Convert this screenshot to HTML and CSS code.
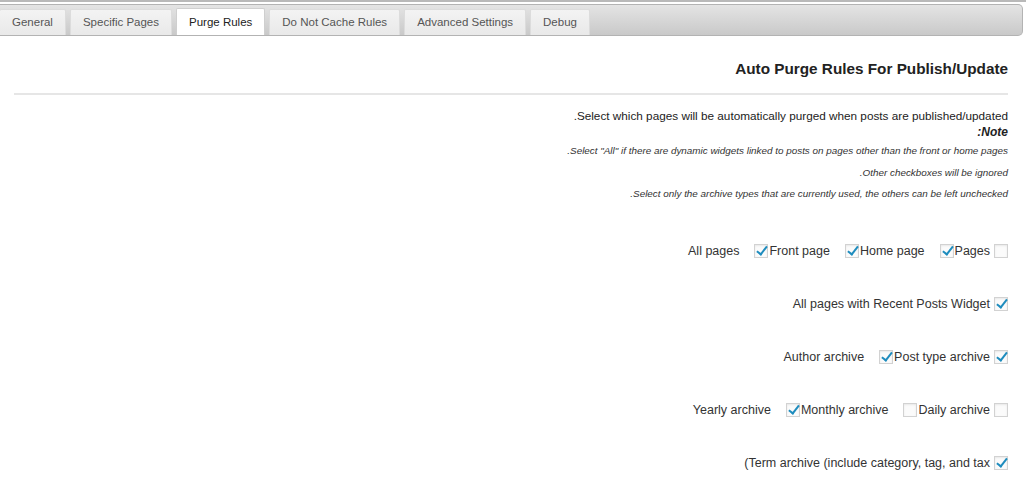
FILE: index.html
```html
<!DOCTYPE html>
<html>
<head>
<meta charset="utf-8">
<link rel="stylesheet" href="styles.css">
</head>
<body>
<div class="page">
  <div class="tabbar">
    <div class="tab">General</div>
    <div class="tab">Specific Pages</div>
    <div class="tab active">Purge Rules</div>
    <div class="tab">Do Not Cache Rules</div>
    <div class="tab">Advanced Settings</div>
    <div class="tab">Debug</div>
  </div>
  <div class="content" dir="rtl">
    <h3 class="title">Auto Purge Rules For Publish/Update</h3>
    <hr class="rule">
    <p class="lead">Select which pages will be automatically purged when posts are published/updated.</p>
    <p class="note">Note:</p>
    <p class="small s1">Select "All" if there are dynamic widgets linked to posts on pages other than the front or home pages.</p>
    <p class="small s2">Other checkboxes will be ignored.</p>
    <p class="small s3">Select only the archive types that are currently used, the others can be left unchecked.</p>

    <div class="rows" dir="ltr">
      <div class="row">
        <span class="lbl">All pages</span>
        <span class="opt"><span class="cb on"></span>Front page</span>
        <span class="opt"><span class="cb on"></span>Home page</span>
        <span class="opt last"><span class="cb on"></span>Pages</span>
        <span class="cb"></span>
      </div>
      <div class="row">
        <span class="lbl last">All pages with Recent Posts Widget</span>
        <span class="cb on"></span>
      </div>
      <div class="row">
        <span class="lbl">Author archive</span>
        <span class="opt last"><span class="cb on"></span>Post type archive</span>
        <span class="cb on"></span>
      </div>
      <div class="row">
        <span class="lbl">Yearly archive</span>
        <span class="opt"><span class="cb on"></span>Monthly archive</span>
        <span class="opt last"><span class="cb"></span>Daily archive</span>
        <span class="cb"></span>
      </div>
      <div class="row">
        <span class="lbl last">(Term archive (include category, tag, and tax</span>
        <span class="cb on"></span>
      </div>
    </div>
  </div>
</div>
</body>
</html>
```
FILE: styles.css
```css
html, body {
  margin: 0;
  padding: 0;
  background: #fff;
}
body {
  font-family: "Liberation Sans", Arial, sans-serif;
  color: #333;
  font-size: 12px;
}
.page {
  width: 1026px;
  height: 483px;
  overflow: hidden;
  border-top: 2px solid #b9b9b9;
  box-sizing: border-box;
  padding-top: 2px;
}
.tabbar {
  display: flex;
  align-items: flex-end;
  gap: 4px;
  height: 30px;
  margin-right: 3px;
  background: linear-gradient(#e4e4e4, #c9c9c9);
  border: 1px solid #b3b3b3;
  border-left: none;
  border-radius: 0 5px 5px 0;
}
.tab {
  height: 26px;
  line-height: 25px;
  padding: 0 12px;
  background: linear-gradient(#f3f3f3, #e9e9e9);
  color: #555;
  font-size: 11.5px;
  border: 1px solid #dcdcdc;
  border-bottom: none;
  box-sizing: border-box;
  border-radius: 2px 2px 0 0;
}
.tab:first-child {
  border-left: none;
}
.tab.active {
  background: #fff;
  color: #222;
  border-color: #cfcfcf;
  height: 27px;
  line-height: 27px;
}
.content {
  padding: 0 18px 0 14px;
}
.title {
  margin: 0;
  padding-top: 23px;
  font-size: 15.3px;
  font-weight: bold;
  color: #222;
  line-height: 20px;
}
.rule {
  margin: 14px 0 0 0;
  border: none;
  border-top: 2px solid #e6e6e6;
  height: 0;
}
.lead {
  margin: 13px 0 0 0;
  font-size: 11.75px;
  line-height: 16px;
  color: #222;
}
.note {
  margin: 0;
  font-weight: bold;
  font-style: italic;
  font-size: 12px;
  line-height: 16px;
  color: #222;
}
.small {
  margin: 0;
  font-style: italic;
  font-size: 9.9px;
  line-height: 14px;
  color: #333;
}
.s1 { margin-top: 4px; }
.s2 { margin-top: 8px; }
.s3 { margin-top: 7px; }
.rows {
  margin-top: 42px;
  display: flex;
  flex-direction: column;
  gap: 37px;
}
.row {
  display: flex;
  justify-content: flex-end;
  align-items: center;
  height: 16px;
  font-size: 12.5px;
  color: #333;
}
.lbl {
  margin-right: 15px;
}
.opt {
  display: inline-flex;
  align-items: center;
  margin-right: 15px;
}
.lbl.last,
.opt.last {
  margin-right: 4px;
}
.cb {
  position: relative;
  display: inline-block;
  flex: none;
  width: 14px;
  height: 14px;
  box-sizing: border-box;
  border: 1px solid #d2d2d2;
  background: #fbfbfb;
  box-shadow: inset 0 1px 2px rgba(0,0,0,0.08);
}
.opt .cb {
  margin-right: 1px;
}
.cb.on::after {
  content: "";
  position: absolute;
  left: 4px;
  top: -1px;
  width: 4px;
  height: 9px;
  border-right: 2.5px solid #1e8cbe;
  border-bottom: 2.5px solid #1e8cbe;
  transform: rotate(38deg);
}
```
